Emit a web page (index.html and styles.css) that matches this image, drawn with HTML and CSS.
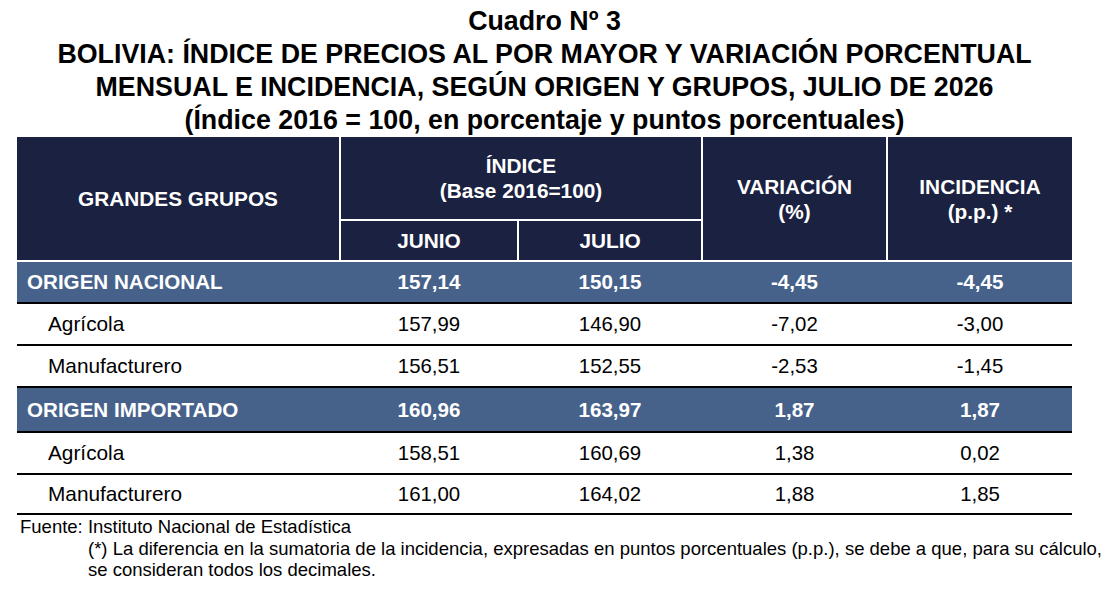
FILE: index.html
```html
<!DOCTYPE html>
<html lang="es">
<head>
<meta charset="utf-8">
<title>Cuadro Nº 3</title>
<link rel="stylesheet" href="styles.css">
</head>
<body>
<div class="page">
  <div class="title">
    <div>Cuadro Nº 3</div>
    <div>BOLIVIA: ÍNDICE DE PRECIOS AL POR MAYOR Y VARIACIÓN PORCENTUAL</div>
    <div>MENSUAL E INCIDENCIA, SEGÚN ORIGEN Y GRUPOS, JULIO DE 2026</div>
    <div>(Índice 2016 = 100, en porcentaje y puntos porcentuales)</div>
  </div>

  <div class="head">
    <div class="hc h-grupos">GRANDES GRUPOS</div>
    <div class="hc h-indice">ÍNDICE<br>(Base 2016=100)</div>
    <div class="hc h-var">VARIACIÓN<br>(%)</div>
    <div class="hc h-inc">INCIDENCIA<br>(p.p.) *</div>
    <div class="hc h-junio">JUNIO</div>
    <div class="hc h-julio">JULIO</div>
  </div>

  <div class="row group">
    <div class="name">ORIGEN NACIONAL</div>
    <div class="num">157,14</div>
    <div class="num">150,15</div>
    <div class="num">-4,45</div>
    <div class="num">-4,45</div>
  </div>
  <div class="row">
    <div class="name sub">Agrícola</div>
    <div class="num">157,99</div>
    <div class="num">146,90</div>
    <div class="num">-7,02</div>
    <div class="num">-3,00</div>
  </div>
  <div class="row">
    <div class="name sub">Manufacturero</div>
    <div class="num">156,51</div>
    <div class="num">152,55</div>
    <div class="num">-2,53</div>
    <div class="num">-1,45</div>
  </div>
  <div class="row group tall">
    <div class="name">ORIGEN IMPORTADO</div>
    <div class="num">160,96</div>
    <div class="num">163,97</div>
    <div class="num">1,87</div>
    <div class="num">1,87</div>
  </div>
  <div class="row">
    <div class="name sub">Agrícola</div>
    <div class="num">158,51</div>
    <div class="num">160,69</div>
    <div class="num">1,38</div>
    <div class="num">0,02</div>
  </div>
  <div class="row short">
    <div class="name sub">Manufacturero</div>
    <div class="num">161,00</div>
    <div class="num">164,02</div>
    <div class="num">1,88</div>
    <div class="num">1,85</div>
  </div>

  <div class="notes">
    <div class="source">Fuente: Instituto Nacional de Estadística</div>
    <div class="note">(*) La diferencia en la sumatoria de la incidencia, expresadas en puntos porcentuales (p.p.), se debe a que, para su cálculo,<br>se consideran todos los decimales.</div>
  </div>
</div>
</body>
</html>
```

FILE: styles.css
```css
* { box-sizing: border-box; }

body {
  margin: 0;
  background: #ffffff;
  font-family: "Liberation Sans", Arial, sans-serif;
  color: #000000;
}

.page {
  padding-left: 17px;
  width: 1117px;
}

.title {
  width: 1055px;
  padding-top: 5px;
  text-align: center;
  font-weight: bold;
  font-size: 26.8px;
  line-height: 33px;
  color: #000000;
}

.head {
  width: 1055px;
  display: grid;
  grid-template-columns: 322px 176px 182px 183px 184px;
  grid-template-rows: 82px 39px;
  column-gap: 2px;
  row-gap: 2px;
  margin-bottom: 2px;
}

.hc {
  background: #1b2140;
  color: #ffffff;
  font-weight: bold;
  font-size: 20.8px;
  line-height: 25px;
  display: flex;
  align-items: center;
  justify-content: center;
  text-align: center;
}

.h-grupos { grid-column: 1; grid-row: 1 / 3; }
.h-indice { grid-column: 2 / 4; grid-row: 1; }
.h-var { grid-column: 4; grid-row: 1 / 3; }
.h-inc { grid-column: 5; grid-row: 1 / 3; }
.h-junio { grid-column: 2; grid-row: 2; }
.h-julio { grid-column: 3; grid-row: 2; }

.row {
  width: 1055px;
  height: 42px;
  display: grid;
  grid-template-columns: 322px 176px 182px 183px 184px;
  column-gap: 2px;
  align-items: center;
  border-bottom: 2px solid #000000;
  font-size: 20.4px;
}

.row.tall { height: 45px; }
.row.short { height: 40px; }

.row.group {
  background: #46628b;
  color: #ffffff;
  font-weight: bold;
  font-size: 20.6px;
}

.name { padding-left: 10px; }
.name.sub { padding-left: 31px; font-size: 20.8px; }

.num { text-align: center; }

.notes {
  font-size: 18.5px;
  line-height: 21.5px;
  padding-top: 1px;
}

.source { margin-left: 3px; }
.note { margin-left: 71px; white-space: nowrap; }
```
